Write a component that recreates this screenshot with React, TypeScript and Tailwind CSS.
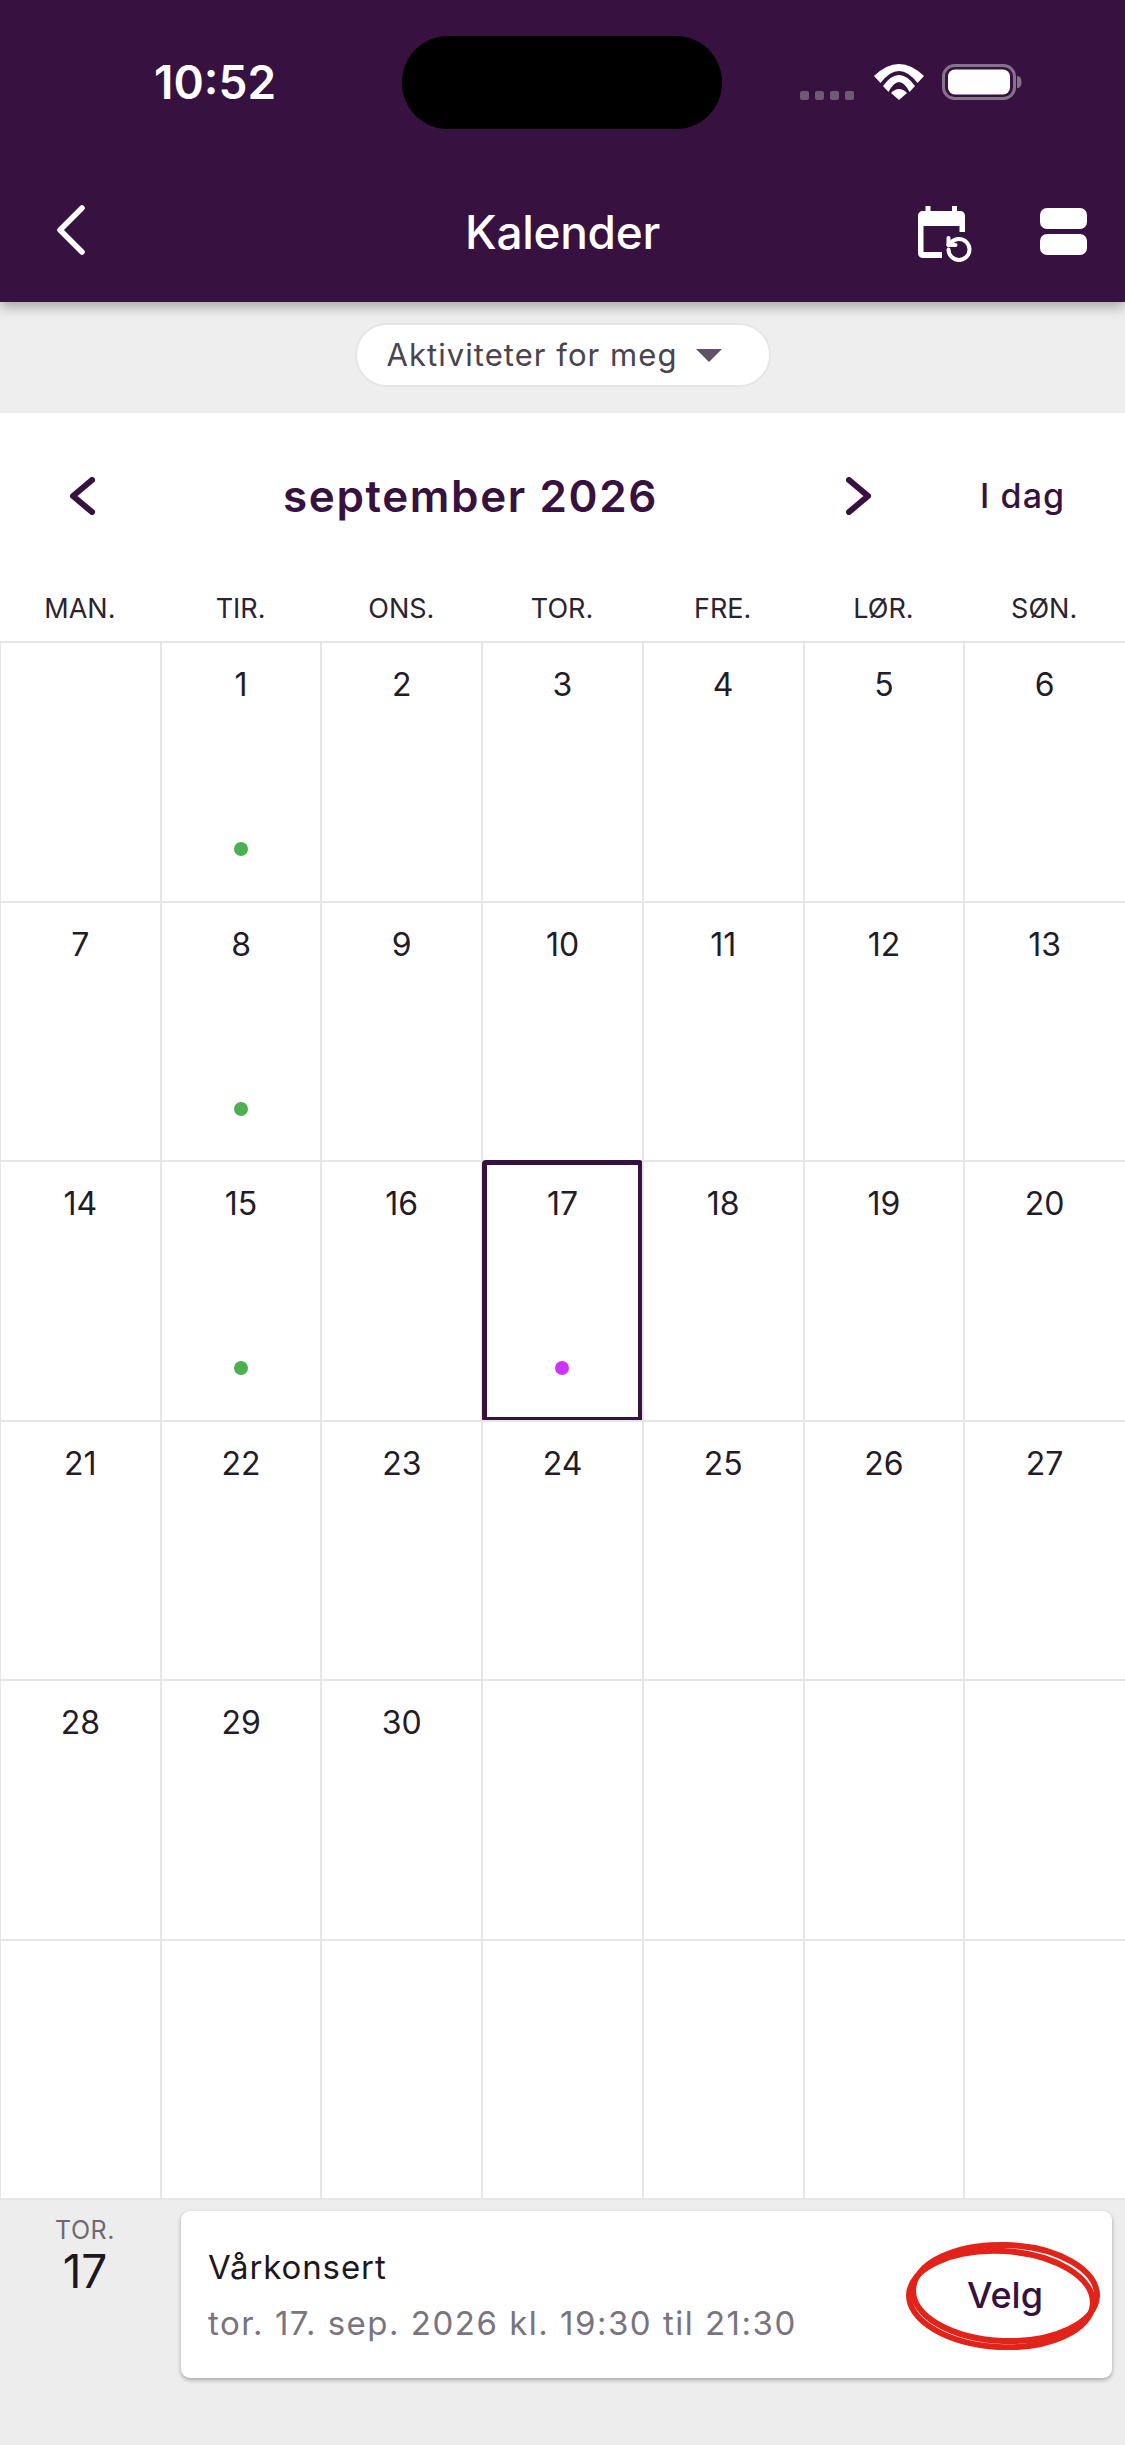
const DAYS = ["MAN.", "TIR.", "ONS.", "TOR.", "FRE.", "LØR.", "SØN."];
const CELLS: (number | null)[] = [
  null, 1, 2, 3, 4, 5, 6, 7, 8, 9, 10, 11, 12, 13, 14, 15, 16, 17, 18, 19, 20, 21, 22, 23, 24, 25, 26, 27, 28, 29, 30,
  null, null, null, null, null, null, null, null, null, null, null,
];
const GREEN = [1, 8, 15];

function Chevron({ dir, className }: { dir: "left" | "right"; className: string }) {
  return (
    <svg viewBox="0 0 26 38" className={className} fill="none" stroke="currentColor" strokeLinecap="round" strokeLinejoin="round">
      <path d={dir === "left" ? "M23 3 L4 19 L23 35" : "M3 3 L22 19 L3 35"} strokeWidth="6" />
    </svg>
  );
}

function CalendarReset() {
  return (
    <svg viewBox="0 0 54 57" className="w-[54px] h-[57px] text-white" fill="none">
      <path fill="currentColor" d="M7.5 0h5v5h21.5v-5h5v5h3c3 0 5 2 5 5v16h-5.5v-6h-36v26h18.5v6h-19c-3 0-5-2-5-5v-37c0-3 2-5 5-5h2.500z" />
      <path d="M30.5 43.5a10.5 10.5 0 1 0 10.5-10.5a11 11 0 0 0-8 3.5l-2.5 2.5" stroke="currentColor" strokeWidth="4" strokeLinecap="round" strokeLinejoin="round" />
      <path d="M30.5 32v7h7" stroke="currentColor" strokeWidth="4" strokeLinecap="round" strokeLinejoin="round" />
    </svg>
  );
}

function Wifi() {
  return (
    <svg viewBox="0 0 50 36" className="w-[50px] h-[36px]" fill="#fff">
      <path d="M0 12 Q25 -12 50 12 L43.5 19 Q25 -5 6.500 19 Z" />
      <path d="M9 22 Q25 0 41 22 L35.500 28 Q25 8 14.500 28 Z" />
      <path d="M17 29 Q25 21 33 29 L25 36 Z" />
    </svg>
  );
}

function Battery() {
  return (
    <svg viewBox="0 0 80 36" className="w-[80px] h-[36px]">
      <rect x="1.500" y="1.500" width="71" height="33" rx="11" fill="none" stroke="#85738c" strokeWidth="3" />
      <rect x="6" y="5.500" width="62" height="25" rx="7" fill="#fff" />
      <path d="M75 12 c3 0 4.500 2 4.500 6 s-1.500 6 -4.500 6z" fill="#85738c" />
    </svg>
  );
}

export default function App() {
  return (
    <div className="w-[1125px] h-[2445px] flex flex-col overflow-hidden bg-[#eeeeee] font-['Inter','Liberation_Sans',sans-serif]">
      <header className="relative z-10 h-[302px] shrink-0 bg-[#371140] shadow-[0_5px_12px_rgba(0,0,0,0.3)] flex flex-col">
        <div className="h-[161px] pt-[36px] flex items-start">
          <div className="ml-[154px] w-[248px] h-[93px] flex items-center text-white text-[46px] font-semibold">10:52</div>
          <div className="w-[320px] h-[93px] rounded-[46px] bg-black" />
          <div className="ml-[78px] mt-[28px] h-[36px] flex items-start">
            <div className="flex gap-[6px] mt-[27px] mr-[20px]">
              <span className="w-[9px] h-[9px] rounded-[2px] bg-[#6e5a75]" />
              <span className="w-[9px] h-[9px] rounded-[2px] bg-[#6e5a75]" />
              <span className="w-[9px] h-[9px] rounded-[2px] bg-[#6e5a75]" />
              <span className="w-[9px] h-[9px] rounded-[2px] bg-[#6e5a75]" />
            </div>
            <Wifi />
            <div className="ml-[18px]"><Battery /></div>
          </div>
        </div>
        <div className="flex-1 grid grid-cols-[1fr_auto_1fr] items-center">
          <div className="pl-[57px] mb-[3px]">
            <svg viewBox="0 0 28 50" className="w-[28px] h-[50px]" fill="none" stroke="#fff" strokeWidth="5.500" strokeLinecap="round" strokeLinejoin="round">
              <path d="M25 3 L3 25 L25 47" />
            </svg>
          </div>
          <div className="text-white text-[46px] font-medium tracking-[-0.3px] leading-none">Kalender</div>
          <div className="flex justify-end items-center gap-[68px] pr-[38px]">
            <div className="mt-[6px]"><CalendarReset /></div>
            <div className="flex flex-col gap-[5px]">
              <span className="w-[47px] h-[21px] rounded-[7px] bg-white" />
              <span className="w-[47px] h-[21px] rounded-[7px] bg-white" />
            </div>
          </div>
        </div>
      </header>

      <div className="h-[111px] shrink-0 flex justify-center pt-[21px]">
        <div className="w-[416px] h-[64px] rounded-[32px] bg-white border-2 border-[#e6e6e6] flex items-center justify-center gap-[19px] pr-[16px]">
          <span className="text-[31px] tracking-[1.05px] text-[#4a4350] leading-none pb-[2px]">Aktiviteter for meg</span>
          <svg viewBox="0 0 26 13" className="w-[26px] h-[13px]"><path d="M0 0 H26 L13 13 Z" fill="#5f5266" /></svg>
        </div>
      </div>

      <main className="bg-white shrink-0">
        <div className="h-[166px] flex items-center relative">
          <div className="w-[69px]" />
          <Chevron dir="left" className="w-[26px] h-[38px] text-[#371140]" />
          <div className="w-[751px] text-center">
            <span className="text-[44px] font-semibold text-[#371140] tracking-[1.6px] leading-none">september 2026</span>
          </div>
          <Chevron dir="right" className="w-[26px] h-[38px] text-[#371140]" />
          <div className="ml-[108px] text-[34px] font-medium text-[#371140] tracking-[1.1px] leading-none">I dag</div>
        </div>
        <div className="grid grid-cols-7 h-[62px]">
          {DAYS.map((d) => (
            <div key={d} className="text-center text-[27px] text-[#2b2330] leading-none pt-[16px] pr-[1px]">{d}</div>
          ))}
        </div>
        <div className="grid grid-cols-7 grid-rows-[repeat(6,259.5px)] border-b-2 border-[#e6e6e6]">
          {CELLS.map((n, i) => (
            <div key={i} className="relative -ml-[1px] border-l-2 border-t-2 border-[#e6e6e6] flex flex-col items-center pt-[23px] pr-[1px]">
              {n !== null && <span className="text-[32px] leading-[38px] text-[#231b28]">{n}</span>}
              {n !== null && GREEN.includes(n) && <span className="absolute top-[199px] w-[14px] h-[14px] rounded-full bg-[#4caf50]" />}
              {n === 17 && (
                <>
                  <span className="absolute top-[199px] w-[14px] h-[14px] rounded-full bg-[#cc33ff]" />
                  <span className="absolute -left-[1px] -top-[2px] w-[161px] h-[262px] border-[5px] border-[#371140] rounded-[4px]" />
                </>
              )}
            </div>
          ))}
        </div>
      </main>

      <div className="flex-1 flex items-start gap-[11px] pt-[11px] bg-[#ededed]">
        <div className="w-[170px] flex flex-col items-center pt-[5px]">
          <span className="text-[25px] tracking-[0.6px] leading-[28px] text-[#6f6a72]">TOR.</span>
          <span className="text-[46px] leading-[52px] mt-[1px] text-[#1d1720]">17</span>
        </div>
        <div className="relative w-[931px] h-[167px] rounded-[9px] bg-white shadow-[0_2px_4px_rgba(0,0,0,0.3)] flex items-center pl-[27px]">
          <div className="flex-1 flex flex-col gap-[16px]">
            <span className="text-[33px] tracking-[0.9px] leading-[40px] text-[#1d1720]">Vårkonsert</span>
            <span className="text-[33px] leading-[40px] text-[#7a7380] tracking-[1.5px]">tor. 17. sep. 2026 kl. 19:30 til 21:30</span>
          </div>
          <span className="mr-[69px] text-[36px] font-medium leading-none text-[#371140]">Velg</span>
          <svg viewBox="0 0 196 110" className="absolute left-[724px] top-[29px] w-[196px] h-[110px]" fill="none" stroke="#e2231a">
            <ellipse cx="100" cy="53" rx="92" ry="48" strokeWidth="6" transform="rotate(2 100 54)" />
            <ellipse cx="96" cy="59" rx="92" ry="48" strokeWidth="6" transform="rotate(3 96 58)" />
          </svg>
        </div>
      </div>
    </div>
  );
}
